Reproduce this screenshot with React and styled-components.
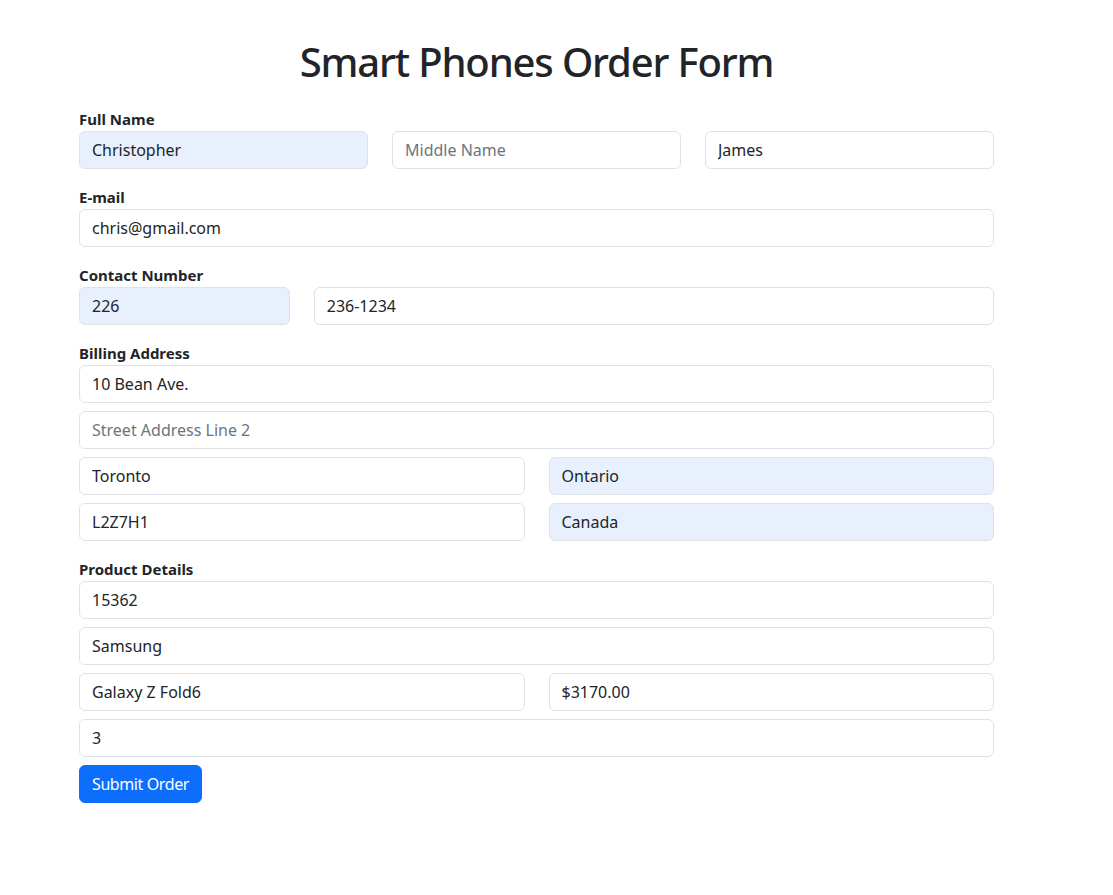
import React from "react";
import styled, { createGlobalStyle } from "styled-components";

const Global = createGlobalStyle`
  * { box-sizing: border-box; }
  body {
    margin: 0;
    background: #fff;
    color: #212529;
    font-family: "Noto Sans", "Open Sans", sans-serif;
    font-size: 16px;
    line-height: 1.5;
  }
`;

const Page = styled.div`
  width: 915px;
  margin-left: 79px;
  padding-top: 38px;
`;

const Title = styled.h1`
  margin: 0 0 21px;
  text-align: center;
  font-size: 40px;
  font-weight: 500;
  line-height: 48px;
  letter-spacing: -1.15px;
`;

const Group = styled.div`
  margin-bottom: 16px;
`;

const Label = styled.label`
  display: block;
  font-weight: 700;
  font-size: 15px;
  line-height: 24px;
`;

const Row = styled.div`
  display: grid;
  grid-template-columns: repeat(12, 1fr);
  column-gap: 24px;
  margin-bottom: ${(p) => (p.$last ? "0" : "8px")};
`;

const Input = styled.input`
  grid-column: span ${(p) => p.$span || 12};
  display: block;
  width: 100%;
  height: 38px;
  padding: 6px 12px;
  font-family: inherit;
  font-size: 16px;
  line-height: 24px;
  color: #212529;
  background: ${(p) => (p.$filled ? "#e8f0fe" : "#fff")};
  border: 1px solid #dee2e6;
  border-radius: 6px;
  outline: none;
  &::placeholder {
    color: #6c757d;
  }
`;

const Button = styled.button`
  display: inline-block;
  height: 38px;
  padding: 6px 12px;
  font-family: inherit;
  font-size: 16px;
  line-height: 24px;
  letter-spacing: -0.4px;
  color: #fff;
  background: #0d6efd;
  border: 1px solid #0d6efd;
  border-radius: 6px;
  cursor: pointer;
`;

export default function App() {
  return (
    <>
      <Global />
      <Page>
        <Title>Smart Phones Order Form</Title>
        <form onSubmit={(e) => e.preventDefault()}>
          <Group>
            <Label>Full Name</Label>
            <Row $last>
              <Input $span={4} $filled defaultValue="Christopher" />
              <Input $span={4} placeholder="Middle Name" />
              <Input $span={4} defaultValue="James" />
            </Row>
          </Group>
          <Group>
            <Label>E-mail</Label>
            <Row $last>
              <Input defaultValue="chris@gmail.com" />
            </Row>
          </Group>
          <Group>
            <Label>Contact Number</Label>
            <Row $last>
              <Input $span={3} $filled defaultValue="226" />
              <Input $span={9} defaultValue="236-1234" />
            </Row>
          </Group>
          <Group>
            <Label>Billing Address</Label>
            <Row>
              <Input defaultValue="10 Bean Ave." />
            </Row>
            <Row>
              <Input placeholder="Street Address Line 2" />
            </Row>
            <Row>
              <Input $span={6} defaultValue="Toronto" />
              <Input $span={6} $filled defaultValue="Ontario" />
            </Row>
            <Row $last>
              <Input $span={6} defaultValue="L2Z7H1" />
              <Input $span={6} $filled defaultValue="Canada" />
            </Row>
          </Group>
          <div>
            <Label>Product Details</Label>
            <Row>
              <Input defaultValue="15362" />
            </Row>
            <Row>
              <Input defaultValue="Samsung" />
            </Row>
            <Row>
              <Input $span={6} defaultValue="Galaxy Z Fold6" />
              <Input $span={6} defaultValue="$3170.00" />
            </Row>
            <Row>
              <Input defaultValue="3" />
            </Row>
            <Button type="submit">Submit Order</Button>
          </div>
        </form>
      </Page>
    </>
  );
}
